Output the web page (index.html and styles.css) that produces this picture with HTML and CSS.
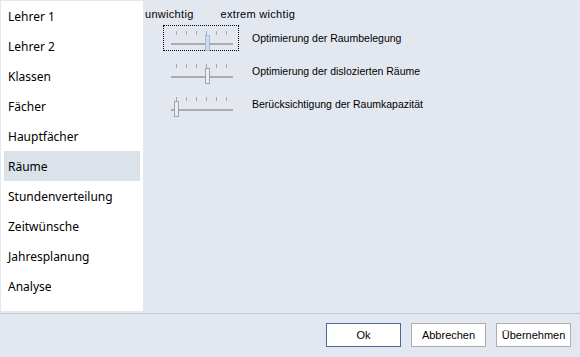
FILE: index.html
```html
<!DOCTYPE html>
<html>
<head>
<meta charset="utf-8">
<link rel="stylesheet" href="styles.css">
</head>
<body>
<div class="dialog">
  <div class="main">
    <ul class="nav">
      <li>Lehrer 1</li>
      <li>Lehrer 2</li>
      <li>Klassen</li>
      <li>Fächer</li>
      <li>Hauptfächer</li>
      <li class="sel">Räume</li>
      <li>Stundenverteilung</li>
      <li>Zeitwünsche</li>
      <li>Jahresplanung</li>
      <li>Analyse</li>
    </ul>
    <div class="content">
      <div class="scale"><span>unwichtig</span><span>extrem wichtig</span></div>
      <div class="row">
        <div class="slider focus">
          <div class="ticks"><i></i><i></i><i></i><i></i><i></i><i></i></div>
          <div class="track"><b class="thumb active" style="left:34px"></b></div>
        </div>
        <span class="label">Optimierung der Raumbelegung</span>
      </div>
      <div class="row">
        <div class="slider">
          <div class="ticks"><i></i><i></i><i></i><i></i><i></i><i></i></div>
          <div class="track"><b class="thumb" style="left:34px"></b></div>
        </div>
        <span class="label">Optimierung der dislozierten Räume</span>
      </div>
      <div class="row">
        <div class="slider">
          <div class="ticks"><i></i><i></i><i></i><i></i><i></i><i></i></div>
          <div class="track"><b class="thumb" style="left:3px"></b></div>
        </div>
        <span class="label">Berücksichtigung der Raumkapazität</span>
      </div>
    </div>
  </div>
  <div class="footer">
    <button class="btn primary">Ok</button>
    <button class="btn">Abbrechen</button>
    <button class="btn">Übernehmen</button>
  </div>
</div>
</body>
</html>
```
FILE: styles.css
```css
html, body {
  margin: 0;
  padding: 0;
  background: #e3e8f0;
}
body {
  width: 580px;
  height: 357px;
  overflow: hidden;
}
.dialog {
  display: flex;
  flex-direction: column;
  height: 357px;
}
.main {
  display: flex;
  height: 312px;
  padding: 1px 0 0 1px;
  box-sizing: border-box;
}
.nav {
  list-style: none;
  margin: 0;
  padding: 0 3px;
  width: 142px;
  height: 310px;
  box-sizing: border-box;
  background: #ffffff;
  font-family: "Noto Sans", "Open Sans", sans-serif;
  font-size: 12px;
  color: #000;
}
.nav li {
  height: 30px;
  line-height: 30px;
  padding: 1px 0 0 4px;
  box-sizing: border-box;
}
.nav li.sel {
  background: #dbe2ea;
}
.content {
  flex: 1;
  padding: 6px 0 0 2px;
  font-family: "Liberation Sans", Arial, sans-serif;
  font-size: 11px;
  color: #000;
}
.scale {
  display: flex;
  gap: 27px;
  height: 14px;
  line-height: 14px;
  letter-spacing: 0.3px;
}
.row {
  display: flex;
  align-items: center;
  height: 33px;
  margin-left: 18px;
}
.slider {
  width: 76px;
  height: 26px;
  box-sizing: border-box;
  border: 1px dotted transparent;
  padding: 5px 0 0 7px;
  position: relative;
}
.slider.focus {
  border-color: #000;
}
.ticks {
  display: flex;
  gap: 9px;
  padding-left: 5px;
  height: 4px;
}
.ticks i {
  width: 1px;
  height: 4px;
  background: #a8a8a8;
}
.track {
  position: relative;
  margin-top: 8px;
  width: 62px;
  height: 2px;
  background: #acacac;
}
.thumb {
  position: absolute;
  top: -8px;
  width: 3px;
  height: 14px;
  border: 1px solid #a3a3a3;
  background: #e9ecf0;
}
.thumb.active {
  border-color: #a4bcd8;
  background: #cddcf0;
}
.label {
  margin-left: 13px;
  font-size: 10.5px;
}
.footer {
  border-top: 1px solid #c4c7cb;
  margin-top: 1px;
  display: flex;
  justify-content: flex-end;
  gap: 10px;
  padding: 9px 9px 0 0;
}
.btn {
  width: 75px;
  height: 24px;
  box-sizing: border-box;
  background: #fff;
  border: 1px solid #adadad;
  font-family: "Liberation Sans", Arial, sans-serif;
  font-size: 11px;
  color: #000;
  padding: 0;
}
.btn.primary {
  border-color: #4a6a9a;
}
```
